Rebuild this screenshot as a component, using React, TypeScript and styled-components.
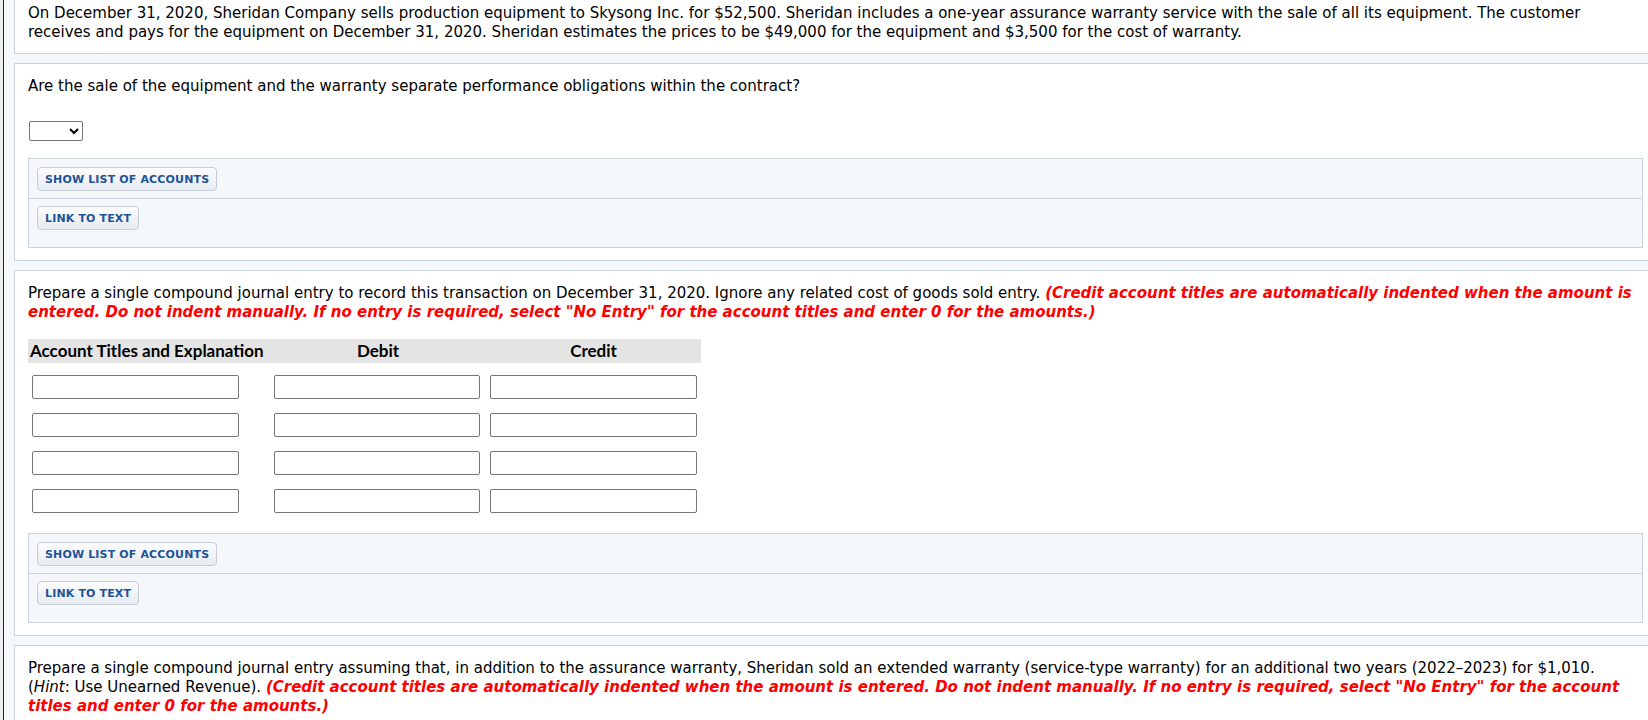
import React from 'react';
import styled, { createGlobalStyle } from 'styled-components';

const GlobalStyle = createGlobalStyle`
  html, body {
    margin: 0;
    padding: 0;
    overflow: hidden;
    background: #eeeeee;
  }
  body {
    font-family: 'DejaVu Sans', Verdana, sans-serif;
    font-size: 15px;
    line-height: 19px;
    color: #000000;
  }
`;

const Frame = styled.div`
  box-sizing: border-box;
  width: 1664px;
  margin: -10px 0 0 3px;
  padding: 0 10px 20px;
  min-height: 760px;
  border-left: 1px solid #222222;
  background: #f5f8fb;
  display: flex;
  flex-direction: column;
  gap: 9px;
`;

const Panel = styled.section<{ $tight?: boolean }>`
  box-sizing: border-box;
  width: 1643px;
  background: #ffffff;
  border: 1px solid #cbd3de;
  padding: ${p => (p.$tight ? '13px 13px 11px' : '13px 13px 12px')};
`;

const Text = styled.p`
  margin: 0;
`;

const Instruction = styled.span`
  color: #ff0000;
  font-weight: bold;
  font-style: italic;
`;

const Select = styled.select`
  display: block;
  box-sizing: border-box;
  width: 54px;
  height: 20px;
  margin: 25px 0 17px 1px;
  border: 1px solid #767676;
  border-radius: 2px;
  background: #ffffff;
  font-family: 'DejaVu Sans', sans-serif;
  font-size: 13px;
`;

const ActionsBox = styled.div<{ $top?: number }>`
  margin-top: ${p => p.$top ?? 0}px;
  border: 1px solid #cbd3de;
  background: #f5f8fb;
`;

const ActionRow = styled.div<{ $last?: boolean }>`
  padding: ${p => (p.$last ? '7px 8px 17px' : '8px 8px 7px')};
  & + & {
    border-top: 1px solid #cbd3de;
  }
`;

const ActionButton = styled.button`
  box-sizing: border-box;
  height: 24px;
  padding: 0 7px;
  border: 1px solid #c6cfd9;
  border-radius: 4px;
  background: linear-gradient(#fbfcfd, #e7ecf1);
  color: #1f5396;
  font-family: 'DejaVu Sans', Verdana, sans-serif;
  font-size: 11px;
  font-weight: bold;
  letter-spacing: 0.15px;
  cursor: pointer;
`;

const Journal = styled.div`
  width: 673px;
  margin-top: 17px;
  display: grid;
  grid-template-columns: 242px 216px 215px;
  row-gap: 14px;
`;

const HeaderCell = styled.div<{ $align?: 'left' | 'center' }>`
  height: 24px;
  margin-bottom: -2px;
  padding: 0 2px;
  background: #e4e4e4;
  font-family: Lato, 'Liberation Sans', sans-serif;
  font-weight: bold;
  font-size: 17px;
  line-height: 24px;
  text-align: ${p => p.$align ?? 'left'};
`;

const EntryInput = styled.input<{ $width: number }>`
  box-sizing: border-box;
  width: ${p => p.$width}px;
  height: 24px;
  margin-left: 4px;
  border: 1px solid #767676;
  border-radius: 2px;
  background: #ffffff;
  font-family: 'DejaVu Sans', sans-serif;
  font-size: 13px;
`;

const rows = [0, 1, 2, 3];

function AccountActions({ top }: { top: number }) {
  return (
    <ActionsBox $top={top}>
      <ActionRow>
        <ActionButton>SHOW LIST OF ACCOUNTS</ActionButton>
      </ActionRow>
      <ActionRow $last>
        <ActionButton>LINK TO TEXT</ActionButton>
      </ActionRow>
    </ActionsBox>
  );
}

export default function App() {
  return (
    <>
      <GlobalStyle />
      <Frame>
        <Panel $tight>
          <Text>
            On December 31, 2020, Sheridan Company sells production equipment to Skysong Inc. for $52,500. Sheridan
            includes a one-year assurance warranty service with the sale of all its equipment. The customer receives and
            pays for the equipment on December 31, 2020. Sheridan estimates the prices to be $49,000 for the equipment
            and $3,500 for the cost of warranty.
          </Text>
        </Panel>

        <Panel>
          <Text>Are the sale of the equipment and the warranty separate performance obligations within the contract?</Text>
          <Select defaultValue="">
            <option value=""></option>
            <option value="yes">Yes</option>
            <option value="no">No</option>
          </Select>
          <AccountActions top={0} />
        </Panel>

        <Panel>
          <Text>
            Prepare a single compound journal entry to record this transaction on December 31, 2020. Ignore any related
            cost of goods sold entry.{' '}
            <Instruction>
              (Credit account titles are automatically indented when the amount is entered. Do not indent manually. If no
              entry is required, select "No Entry" for the account titles and enter 0 for the amounts.)
            </Instruction>
          </Text>
          <Journal>
            <HeaderCell>Account Titles and Explanation</HeaderCell>
            <HeaderCell $align="center">Debit</HeaderCell>
            <HeaderCell $align="center">Credit</HeaderCell>
            {rows.map(r => (
              <React.Fragment key={r}>
                <div>
                  <EntryInput $width={207} />
                </div>
                <div>
                  <EntryInput $width={206} />
                </div>
                <div>
                  <EntryInput $width={207} />
                </div>
              </React.Fragment>
            ))}
          </Journal>
          <AccountActions top={20} />
        </Panel>

        <Panel>
          <Text>
            Prepare a single compound journal entry assuming that, in addition to the assurance warranty, Sheridan sold
            an extended warranty (service-type warranty) for an additional two years (2022–2023) for $1,010.
            <br />
            (<i>Hint</i>: Use Unearned Revenue).{' '}
            <Instruction>
              (Credit account titles are automatically indented when the amount is entered. Do not indent manually. If no
              entry is required, select "No Entry" for the account titles and enter 0 for the amounts.)
            </Instruction>
          </Text>
        </Panel>
      </Frame>
    </>
  );
}
